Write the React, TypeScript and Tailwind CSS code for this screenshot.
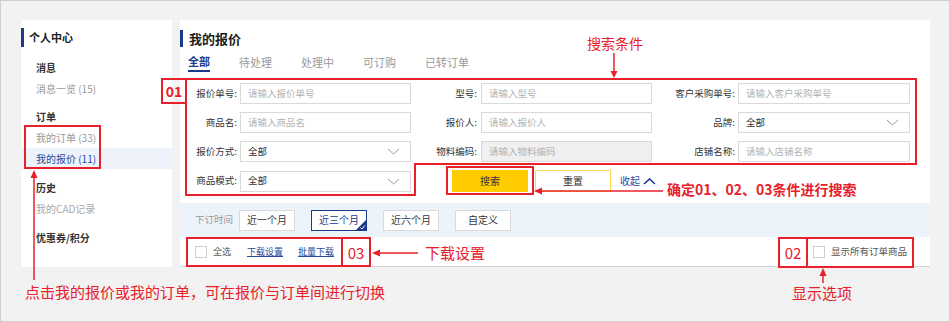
import React from 'react';

const RED = '#e8202a';

function Chevron({ up = false, className = '', sw = 1 }: { up?: boolean; className?: string; sw?: number }) {
  return (
    <svg width="13" height="7" viewBox="0 0 13 7" className={className} fill="none">
      <polyline
        points={up ? '1,6 6.5,1 12,6' : '1,1 6.5,6 12,1'}
        stroke="currentColor"
        strokeWidth={sw}
      />
    </svg>
  );
}

function Field({ placeholder, select = false, disabled = false, w = 'w-[171px]' }: { placeholder: string; select?: boolean; disabled?: boolean; w?: string }) {
  return (
    <div
      className={`${w} h-[21px] border border-[#d9d9d9] flex items-center justify-between pl-[7px] pr-[10px] ${
        disabled ? 'bg-[#f0f0f0]' : 'bg-white'
      }`}
    >
      <span className={`text-[9.5px] leading-none ${select ? 'text-[#333]' : 'text-[#b3b3b3]'}`}>{placeholder}</span>
      {select && <Chevron className="text-[#9a9a9a]" />}
    </div>
  );
}

function Label({ text, w }: { text: string; w: string }) {
  return <div className={`${w} text-right text-[9.5px] text-[#333] leading-none`}>{text}</div>;
}

function Checkbox() {
  return <div className="w-[12px] h-[12px] border border-[#cfcfcf] bg-white" />;
}

export default function App() {
  const sideItem = 'h-[21px] flex items-center pl-[15px] text-[10px] leading-none';
  const timeBtn = 'w-[56px] h-[21px] border border-[#d9d9d9] bg-white flex items-center justify-center text-[10px] text-[#333] leading-none';

  return (
    <div className="relative w-[950px] h-[322px] overflow-hidden bg-[#f2f2f2] shadow-[inset_0_0_0_1px_#cfcfcf] font-['Microsoft_YaHei','Noto_Sans_CJK_SC','Liberation_Sans',sans-serif]">
      <div className="flex gap-[8px] pt-[20px] pl-[21px]">
        {/* 左侧菜单 */}
        <div className="w-[151px] h-[247px] bg-white flex flex-col">
          <div className="mt-[8px] h-[19px] border-l-[3px] border-[#1b3a8c] pl-[5px] flex items-center text-[11px] font-bold text-[#222] leading-none">
            个人中心
          </div>
          <div className="mt-[10px]">
            <div className={`${sideItem} font-bold text-[#333]`}>消息</div>
            <div className={`${sideItem} text-[#999]`}>消息一览 (15)</div>
          </div>
          <div className="mt-[7px]">
            <div className={`${sideItem} font-bold text-[#333]`}>订单</div>
            <div className={`${sideItem} text-[#999]`}>我的订单 (33)</div>
            <div className={`${sideItem} text-[#2a4a9b] bg-[#edf2fb]`}>我的报价 (11)</div>
          </div>
          <div className="mt-[8px]">
            <div className={`${sideItem} font-bold text-[#333]`}>历史</div>
            <div className={`${sideItem} text-[#aaa]`}>我的CAD记录</div>
          </div>
          <div className="mt-[8px]">
            <div className={`${sideItem} font-bold text-[#333]`}>优惠券/积分</div>
          </div>
        </div>

        {/* 主体 */}
        <div className="w-[750px] h-[247px] bg-white flex flex-col border-b border-[#d6d6d6]">
          <div className="mt-[10px] h-[17px] border-l-[3px] border-[#1b3a8c] pl-[6px] flex items-center text-[13px] font-bold text-[#222] leading-none">
            我的报价
          </div>
          <div className="mt-[6px] pl-[8px] flex gap-[29px] text-[11px] leading-none">
            <div className="h-[19px] flex items-center border-b-2 border-[#1b3a8c] font-bold text-[#1b3a8c]">全部</div>
            <div className="h-[19px] flex items-center text-[#999]">待处理</div>
            <div className="h-[19px] flex items-center text-[#999]">处理中</div>
            <div className="h-[19px] flex items-center text-[#999]">可订购</div>
            <div className="h-[19px] flex items-center text-[#999]">已转订单</div>
          </div>

          {/* 搜索条件 */}
          <div className="mt-[11px] pl-[8px] flex flex-col gap-[8px]">
            <div className="flex items-center">
              <Label text="报价单号:" w="w-[49px]" />
              <div className="ml-[3px]"><Field placeholder="请输入报价单号" /></div>
              <Label text="型号:" w="w-[66px]" />
              <div className="ml-[4px]"><Field placeholder="请输入型号" /></div>
              <Label text="客户采购单号:" w="w-[83px]" />
              <div className="ml-[3px]"><Field placeholder="请输入客户采购单号" w="w-[172px]" /></div>
            </div>
            <div className="flex items-center">
              <Label text="商品名:" w="w-[49px]" />
              <div className="ml-[3px]"><Field placeholder="请输入商品名" /></div>
              <Label text="报价人:" w="w-[66px]" />
              <div className="ml-[4px]"><Field placeholder="请输入报价人" /></div>
              <Label text="品牌:" w="w-[83px]" />
              <div className="ml-[3px]"><Field placeholder="全部" select w="w-[172px]" /></div>
            </div>
            <div className="flex items-center">
              <Label text="报价方式:" w="w-[49px]" />
              <div className="ml-[3px]"><Field placeholder="全部" select /></div>
              <Label text="物料编码:" w="w-[66px]" />
              <div className="ml-[4px]"><Field placeholder="请输入物料编码" disabled /></div>
              <Label text="店铺名称:" w="w-[83px]" />
              <div className="ml-[3px]"><Field placeholder="请输入店铺名称" w="w-[172px]" /></div>
            </div>
            <div className="flex items-center">
              <Label text="商品模式:" w="w-[49px]" />
              <div className="ml-[3px]"><Field placeholder="全部" select /></div>
              <button className="ml-[41px] w-[76px] h-[22px] bg-[#ffcc00] text-[10px] text-[#333] leading-none">搜索</button>
              <button className="ml-[7px] w-[76px] h-[22px] bg-white border border-[#ffd84d] text-[10px] text-[#333] leading-none">重置</button>
              <div className="ml-[9px] flex items-center gap-[3px] text-[10px] text-[#2548a8] leading-none">
                收起
                <Chevron up sw={1.6} className="text-[#1b3a8c]" />
              </div>
            </div>
          </div>

          {/* 下订时间 */}
          <div className="mt-[11px] h-[34px] bg-[#edf3fb] pl-[15px] flex items-center">
            <span className="text-[9.5px] text-[#999] leading-none">下订时间</span>
            <div className={`${timeBtn} ml-[6px]`}>近一个月</div>
            <div className="relative ml-[16px] w-[56px] h-[21px] border border-[#1b3a8c] bg-white flex items-center justify-center text-[10px] text-[#1b3a8c] leading-none overflow-hidden">
              近三个月
              <svg width="10" height="10" viewBox="0 0 10 10" className="absolute right-0 bottom-0">
                <polygon points="10,0 10,10 0,10" fill="#1b3a8c" />
                <polyline points="4.5,7.5 6,9 9,5.5" stroke="#fff" strokeWidth="1" fill="none" />
              </svg>
            </div>
            <div className={`${timeBtn} ml-[16px]`}>近六个月</div>
            <div className={`${timeBtn} ml-[16px]`}>自定义</div>
          </div>

          {/* 操作栏 */}
          <div className="flex-1 flex items-center justify-between pl-[15px] pr-[23px]">
            <div className="flex items-center text-[9px] leading-none">
              <Checkbox />
              <span className="ml-[6px] text-[#555]">全选</span>
              <span className="ml-[16px] text-[#2a4a9b] underline">下载设置</span>
              <span className="ml-[15px] text-[#2a4a9b] underline">批量下载</span>
            </div>
            <div className="flex items-center text-[9.5px] leading-none text-[#555]">
              <Checkbox />
              <span className="ml-[6px]">显示所有订单商品</span>
            </div>
          </div>
        </div>
      </div>

      {/* 标注层 */}
      <svg className="absolute inset-0 pointer-events-none" width="950" height="322" fill="none" stroke={RED} strokeWidth="2">
        {/* 01 */}
        <rect x="162" y="79" width="24" height="24" />
        <polygon points="186,79 916,79 916,164 415,164 415,195 186,195" />
        {/* 搜索 */}
        <rect x="447" y="167" width="86" height="27" />
        <line x1="540" y1="191" x2="663" y2="191" strokeWidth="1.5" />
        <polygon points="534,191 542,187.5 542,194.5" fill={RED} stroke="none" />
        {/* 搜索条件 arrow */}
        <line x1="614" y1="53" x2="614" y2="72" strokeWidth="1.5" />
        <polygon points="614,78 610.5,71 617.5,71" fill={RED} stroke="none" />
        {/* 侧栏 */}
        <rect x="25" y="126" width="75" height="42" />
        <line x1="34" y1="177" x2="34" y2="280" strokeWidth="1.5" />
        <polygon points="34,170 30.5,178 37.5,178" fill={RED} stroke="none" />
        {/* 03 */}
        <rect x="187" y="238" width="155" height="28" />
        <rect x="342" y="238" width="28" height="28" />
        <line x1="379" y1="253" x2="418" y2="253" strokeWidth="1.5" />
        <polygon points="372,253 380,249.5 380,256.5" fill={RED} stroke="none" />
        {/* 02 */}
        <rect x="779" y="238" width="28" height="29" />
        <rect x="807" y="238" width="106" height="29" />
        <line x1="823" y1="275" x2="823" y2="283" strokeWidth="1.5" />
        <polygon points="823,268 819.5,276 826.5,276" fill={RED} stroke="none" />
      </svg>

      <div className="absolute left-[162px] top-[79px] w-[24px] h-[24px] flex items-center justify-center text-[14px] font-bold text-[#e8202a] leading-none">01</div>
      <div className="absolute left-[342px] top-[238px] w-[28px] h-[28px] flex items-center justify-center text-[15px] text-[#e8202a] leading-none">03</div>
      <div className="absolute left-[779px] top-[238px] w-[28px] h-[29px] flex items-center justify-center text-[15px] text-[#e8202a] leading-none">02</div>

      <div className="absolute left-[587px] top-[36px] text-[14px] text-[#e8202a] leading-none">搜索条件</div>
      <div className="absolute left-[667px] top-[182px] text-[14px] font-bold text-[#e8202a] leading-none">确定01、02、03条件进行搜索</div>
      <div className="absolute left-[425px] top-[245px] text-[15px] text-[#e8202a] leading-none">下载设置</div>
      <div className="absolute left-[792px] top-[285px] text-[15px] text-[#e8202a] leading-none">显示选项</div>
      <div className="absolute left-[25px] top-[284px] text-[15px] text-[#e8202a] leading-none">点击我的报价或我的订单，可在报价与订单间进行切换</div>
    </div>
  );
}
